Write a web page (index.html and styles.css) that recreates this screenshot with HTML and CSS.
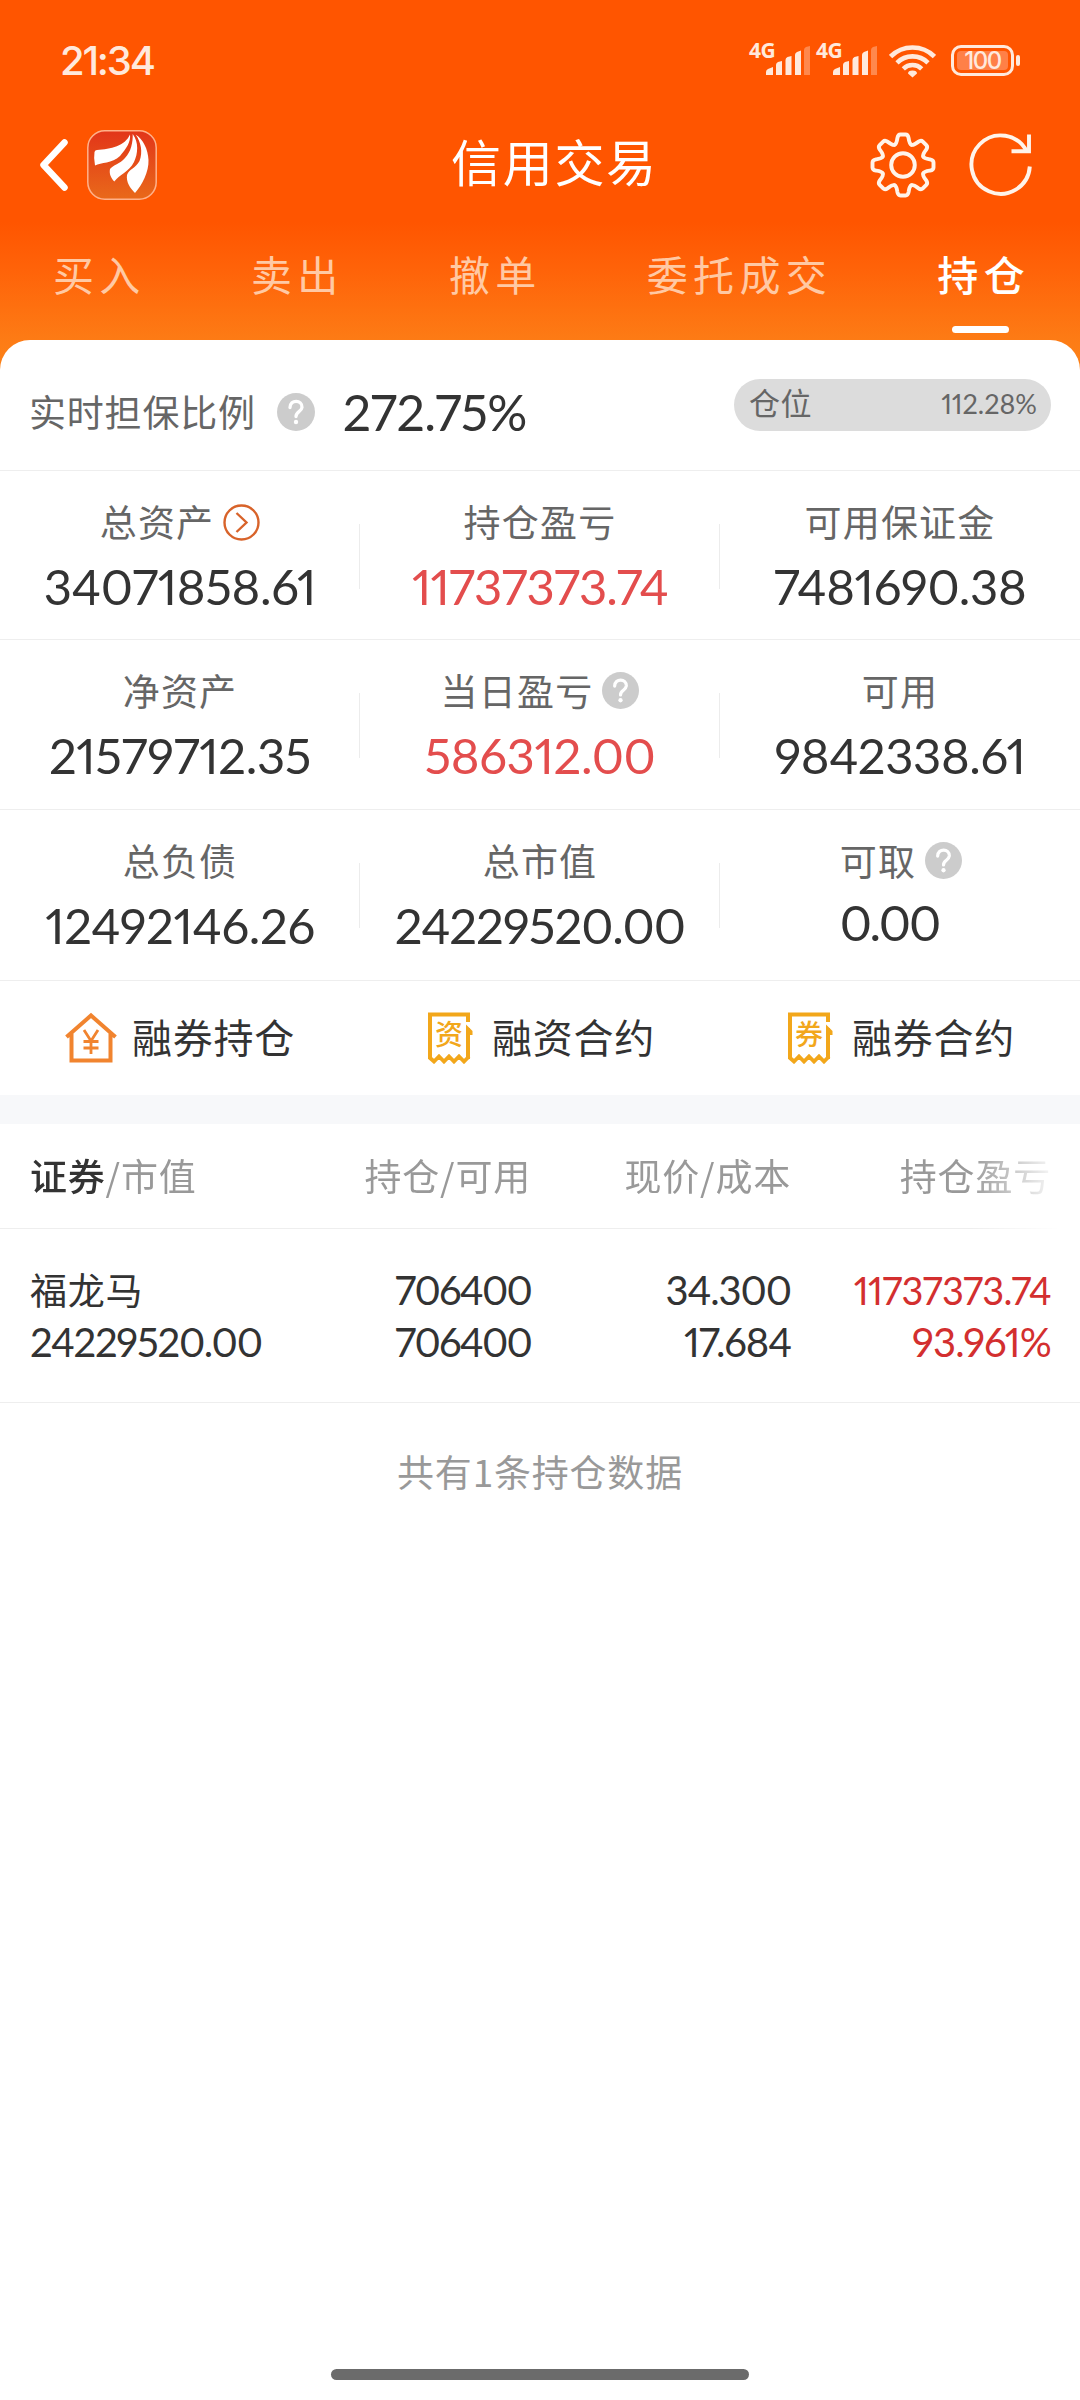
FILE: index.html
```html
<!DOCTYPE html>
<html lang="zh-CN">
<head>
<meta charset="utf-8">
<title>信用交易</title>
<link rel="stylesheet" href="styles.css">
</head>
<body>
<div class="screen">
  <header class="header">
    <div class="status">
      <span class="clock">21:34</span>
      <div class="status-icons">
        <div class="signal"><span class="net">4G</span>
          <svg width="44" height="30" viewBox="0 0 44 30" fill="#ffe9dc"><path d="M0 29v-3q0-2 2-3l5-2v8zM10 29V19q0-2 2-3l4-1v14zM19.500 29V14q0-2 2-3l4-1v19zM29 29V9q0-2 2-3l4-1.500v24.500z"/><path opacity=".35" d="M38 29V4q0-2 2-3l4-1v29z"/></svg>
        </div>
        <div class="signal"><span class="net">4G</span>
          <svg width="44" height="30" viewBox="0 0 44 30" fill="#ffe9dc"><path d="M0 29v-3q0-2 2-3l5-2v8zM10 29V19q0-2 2-3l4-1v14zM19.500 29V14q0-2 2-3l4-1v19zM29 29V9q0-2 2-3l4-1.500v24.500z"/><path opacity=".35" d="M38 29V4q0-2 2-3l4-1v29z"/></svg>
        </div>
        <svg class="wifi" width="47" height="34" viewBox="0 0 47 34" fill="none" stroke="#ffe9dc" stroke-width="4.600"><path d="M1.600 12.500a31 31 0 0 1 43.800 0M8 18.800a22 22 0 0 1 31 0M14.300 24.800a13.200 13.200 0 0 1 18.400 0"/><path d="M23.500 33.500l-4.500-4q0-3 4.500-3t4.500 3z" fill="#ffe9dc" stroke="none"/></svg>
        <div class="battery"><span class="charge">100</span></div>
      </div>
    </div>
    <div class="nav">
      <svg class="back" width="30" height="56" viewBox="0 0 30 56" fill="none" stroke="#fff" stroke-width="6.500" stroke-linecap="round" stroke-linejoin="round"><path d="M25.500 5.500L4.500 28l21 22.500"/></svg>
      <svg class="logo" width="70" height="70" viewBox="0 0 70 70">
        <defs><linearGradient id="lg" x1="0" y1="0" x2="0" y2="1"><stop offset="0" stop-color="#e23519"/><stop offset="1" stop-color="#e9691a"/></linearGradient></defs>
        <rect x=".8" y=".8" width="68.400" height="68.400" rx="17" fill="url(#lg)" stroke="#ffb18a" stroke-width="1.500"/>
        <g fill="#fff"><path d="M43 4.500C38 16 24 19 10 20q-2 0-2.500 2Q6.500 28 8 35.500C14 32 25 34 33 26 39 19 44 12 43 4.500z"/><path d="M45.700 4C46 12 44 22 38 28c-5 6-12 7-15 11-1 5 1 9 4.300 12.500C32 45 42 42 47 32c4-8 5-20-1.300-28z"/><path d="M48.700 4.700C54 12 56 22 52.500 31 49 38 42 39 40 45c-1 7 3 13 8 18C55 55 62 42 61.500 30 61 19 56 9 48.700 4.700z"/></g>
      </svg>
      <h1 class="title">信用交易</h1>
      <svg class="gear" width="66" height="66" viewBox="-33 -33 66 66" fill="none" stroke="#fff4ea" stroke-width="3.900" stroke-linecap="round">
        <defs><path id="tooth" d="M-8.400-20.300C-6.300-21.200-6-24-5.600-27Q-5-30.500-2.500-30.500H2.500Q5-30.500 5.600-27C6-24 6.300-21.200 8.400-20.300"/></defs>
        <use href="#tooth"/><use href="#tooth" transform="rotate(45)"/><use href="#tooth" transform="rotate(90)"/><use href="#tooth" transform="rotate(135)"/><use href="#tooth" transform="rotate(180)"/><use href="#tooth" transform="rotate(225)"/><use href="#tooth" transform="rotate(270)"/><use href="#tooth" transform="rotate(315)"/>
        <circle r="11.800"/>
      </svg>
      <svg class="refresh" width="66" height="66" viewBox="0 0 66 66" fill="none" stroke="#fff4ea" stroke-width="3.900"><path d="M60.800 34.500A29.200 29.200 0 1 1 58 20"/><path d="M60 2.500V19.300H42.500"/></svg>
    </div>
    <nav class="tabs">
      <span>买入</span><span>卖出</span><span>撤单</span><span>委托成交</span><span class="active">持仓</span>
    </nav>
  </header>

  <main class="card">
    <section class="ratio">
      <span class="label">实时担保比例</span>
      <span class="help help-big"><svg viewBox="0 0 38 38"><circle cx="19" cy="19" r="19" fill="#ccc"/><path d="M13 14.500C13 6 25.500 6.500 25 14.300 24.500 19 19 18.500 19 23.500" fill="none" stroke="#fff" stroke-width="3.300" stroke-linecap="round"/><circle cx="19" cy="29" r="2.200" fill="#fff"/></svg></span>
      <span class="num ratio-value">272.75%</span>
      <div class="position"><span class="pos-label">仓位</span><span class="pos-value">112.28%</span></div>
    </section>

    <section class="stats">
      <div class="stat"><div class="label">总资产<svg class="go" viewBox="0 0 37 37" fill="none" stroke="#d8632a" stroke-width="2.400"><circle cx="18.500" cy="18.500" r="17"/><path d="M13.500 9l10 9.500-10 9.500"/></svg></div><div class="num">34071858.61</div></div>
      <div class="stat"><div class="label">持仓盈亏</div><div class="num up snug">11737373.74</div></div>
      <div class="stat"><div class="label">可用保证金</div><div class="num">7481690.38</div></div>
    </section>
    <section class="stats">
      <div class="stat"><div class="label">净资产</div><div class="num">21579712.35</div></div>
      <div class="stat"><div class="label">当日盈亏<span class="help"><svg viewBox="0 0 38 38"><circle cx="19" cy="19" r="19" fill="#ccc"/><path d="M13 14.500C13 6 25.500 6.500 25 14.300 24.500 19 19 18.500 19 23.500" fill="none" stroke="#fff" stroke-width="3.300" stroke-linecap="round"/><circle cx="19" cy="29" r="2.200" fill="#fff"/></svg></span></div><div class="num up">586312.00</div></div>
      <div class="stat"><div class="label">可用</div><div class="num">9842338.61</div></div>
    </section>
    <section class="stats last">
      <div class="stat"><div class="label">总负债</div><div class="num">12492146.26</div></div>
      <div class="stat"><div class="label">总市值</div><div class="num snug">24229520.00</div></div>
      <div class="stat cash"><div class="cash-box"><div class="label">可取<span class="help"><svg viewBox="0 0 38 38"><circle cx="19" cy="19" r="19" fill="#ccc"/><path d="M13 14.500C13 6 25.500 6.500 25 14.300 24.500 19 19 18.500 19 23.500" fill="none" stroke="#fff" stroke-width="3.300" stroke-linecap="round"/><circle cx="19" cy="29" r="2.200" fill="#fff"/></svg></span></div><div class="num">0.00</div></div></div>
    </section>

    <section class="actions">
      <div class="action">
        <svg class="house" width="52" height="52" viewBox="0 0 52 52" fill="none" stroke="#f1842f" stroke-width="4"><path d="M1.500 25L26 3.500 50.500 25M6.500 21.500V48.500H45.500V21.500"/><path stroke-width="2.800" d="M19 18l7 11 7-11M26 28.500V42M18.500 29.500h15M18.500 36h15"/></svg>
        <span class="action-name">融券持仓</span>
      </div>
      <div class="action contract">
        <span class="ticket"><svg width="45" height="52" viewBox="0 0 45 52" fill="none" stroke="#f2a71b" stroke-width="4"><path d="M40 10V2.500H2V47M40 16V47"/><path stroke-width="3.800" d="M1.500 45.500l4.500 4 5-5 5 5 5-5 5 5 5-5 5 5 5-5"/><path d="M38 12.500l6.500 6.500v4H38z" fill="#f2a71b" stroke="none"/></svg><b>资</b></span>
        <span class="action-name">融资合约</span>
      </div>
      <div class="action contract">
        <span class="ticket"><svg width="45" height="52" viewBox="0 0 45 52" fill="none" stroke="#f2a71b" stroke-width="4"><path d="M40 10V2.500H2V47M40 16V47"/><path stroke-width="3.800" d="M1.500 45.500l4.500 4 5-5 5 5 5-5 5 5 5-5 5 5 5-5"/><path d="M38 12.500l6.500 6.500v4H38z" fill="#f2a71b" stroke="none"/></svg><b>券</b></span>
        <span class="action-name">融券合约</span>
      </div>
    </section>

    <section class="table">
      <div class="thead">
        <span><strong>证券</strong>/市值</span><span>持仓/可用</span><span>现价/成本</span><span>持仓盈亏</span>
      </div>
      <div class="trow">
        <div class="holding"><span class="name">福龙马</span><span>24229520.00</span></div>
        <div class="quantity"><span>706400</span><span>706400</span></div>
        <div class="price"><span>34.300</span><span>17.684</span></div>
        <div class="gain"><span class="small">11737373.74</span><span>93.961%</span></div>
      </div>
      <p class="count">共有1条持仓数据</p>
    </section>
  </main>
  <div class="home-bar"></div>
</div>
</body>
</html>
```
FILE: styles.css
```css
* { box-sizing: border-box; }
body { margin: 0; background: #fff; font-family: "Noto Sans CJK SC", sans-serif; }
svg { display: block; flex: none; }
.screen {
  width: 1080px; height: 2400px; display: flex; flex-direction: column; overflow: hidden;
  background: linear-gradient(#ff5500 0, #ff5500 222px, #ff6309 270px, #fd7d16 345px, #fb8318 380px);
}
.header { height: 340px; flex: none; }

.status { height: 120px; padding: 0 60px; display: flex; justify-content: space-between; }
.clock { font: 500 40px/122px Inter, sans-serif; letter-spacing: -2.200px; color: #ffe9dc; }
.status-icons { display: flex; align-items: flex-start; padding-top: 42px; }
.signal { display: flex; width: 67px; }
.signal svg { margin: 4px 0 0 -11px; }
.net { font: 700 21px/16px "Noto Sans", sans-serif; letter-spacing: -.6px; color: #ffe9dc; width: 28px; }
.wifi { margin: 2px 15px 0 6px; }
.battery {
  position: relative; width: 63px; height: 31px; margin: 3px 6px 0 0; padding: 3px;
  border: 3px solid #ffe9dc; border-radius: 10px; display: flex;
}
.battery::after {
  content: ""; position: absolute; right: -9px; top: 7px; width: 4px; height: 11px;
  border-radius: 2px; background: #ffe9dc;
}
.charge {
  flex: 1; border-radius: 4px; background: #ff8047; color: #ffe9dc; text-align: center;
  font: 500 24px/20px Inter, sans-serif; letter-spacing: -1.500px;
}

.nav { height: 90px; display: flex; align-items: center; padding: 0 45px 0 39px; }
.logo { margin: -1px 294px 0 18px; }
.back { margin-top: 0; }
.title { margin: -10px 0 0; font-weight: 400; font-size: 50px; line-height: 90px; letter-spacing: 1.700px; color: #fff; white-space: nowrap; }
.gear { margin-left: auto; }
.refresh { margin: 0 0 0 33px; }

.tabs { height: 130px; padding: 0 50px 0 53px; display: flex; justify-content: space-between; font-size: 41px; line-height: 126px; letter-spacing: 5.300px; color: #ffc9a4; }
.active { position: relative; font-weight: 500; color: #fff; }
.active::after {
  content: ""; position: absolute; left: 15px; bottom: 7px; width: 57px; height: 7px;
  border-radius: 4px; background: #fff;
}

.card { flex: 1; background: #fff; border-radius: 30px 30px 0 0; }
.label { display: flex; align-items: center; font-size: 37px; line-height: 54px; letter-spacing: 1.200px; color: #666; white-space: nowrap; }
.num { font-family: Lato, sans-serif; font-feature-settings: "pnum"; font-size: 49px; line-height: 60px; letter-spacing: -.35px; color: #333; }
.snug { letter-spacing: -.9px; }
.up { color: #e34d4d; }
.help svg { width: 37px; height: 37px; }
.help { margin: 1px 0 0 9px; }
.help-big { margin-left: 21px; }
.help-big svg { width: 38px; height: 38px; }
.go { width: 37px; height: 37px; margin: 2px 0 0 9px; }

.ratio { height: 131px; padding: 12px 29px 0 29px; display: flex; align-items: center; border-bottom: 1px solid #eee; }
.ratio .label { letter-spacing: .8px; }
.ratio-value { margin: 1px 0 0 28px; font-size: 50px; letter-spacing: -.6px; }
.position {
  margin: -13px 0 0 auto; width: 317px; height: 52px; padding: 0 14px 0 15px; border-radius: 26px;
  display: flex; align-items: center; justify-content: space-between; background: #dcdcdc; color: #666;
}
.pos-label { font-size: 31px; line-height: 44px; margin-top: -6px; letter-spacing: .5px; }
.pos-value { font: 27px/40px Lato, sans-serif; font-feature-settings: "pnum"; margin-top: -1px; }

.stats { height: 169px; display: grid; grid-template-columns: repeat(3, 1fr); border-bottom: 1px solid #eee; }
.stats + .stats { height: 170px; }
.stats.last { height: 171px; }
.stat { position: relative; display: flex; flex-direction: column; align-items: center; padding-top: 23px; }
.stat .num { margin-top: 8px; }
.stat + .stat::before { content: ""; position: absolute; left: -1px; top: 53px; width: 1px; height: 65px; background: #ececec; }
.cash-box { margin-left: 2px; }
.cash .num { margin: 5px 0 0 0; letter-spacing: -2px; }

.actions { height: 114px; display: grid; grid-template-columns: repeat(3, 1fr); }
.action { display: flex; align-items: center; justify-content: center; font-size: 40px; letter-spacing: .8px; color: #333; }
.action-name { margin-top: -4px; }
.house { margin-right: 15px; }
.contract { padding-left: 3px; }
.ticket { position: relative; margin-right: 19px; }
.ticket b { position: absolute; left: 7px; top: 1px; font-size: 28px; line-height: 40px; letter-spacing: 0; font-weight: 500; color: #f2a71b; }

.table { border-top: 29px solid #f7f8fa; }
.thead, .trow { display: grid; grid-template-columns: 240px 261px 260px 260px; padding: 0 29px 0 30px; border-bottom: 1px solid #eee; }
.thead {
  height: 105px; font-size: 37px; line-height: 102px; letter-spacing: .8px; color: #999;
  -webkit-mask-image: linear-gradient(90deg, #000 970px, transparent 1060px);
  mask-image: linear-gradient(90deg, #000 970px, transparent 1060px);
}
.thead span { white-space: nowrap; }
.thead span + span, .trow div + div { text-align: right; }
.thead strong { font-weight: 500; color: #333; }
.trow { height: 174px; padding-top: 35px; font: 40px/52px Lato, sans-serif; font-feature-settings: "pnum"; letter-spacing: -.8px; color: #333; }
.trow span { display: block; }
.trow .name { font-family: "Noto Sans CJK SC", sans-serif; font-size: 37px; line-height: 50px; margin-bottom: 2px; letter-spacing: .8px; }
.holding { letter-spacing: -1.200px; }
.quantity { letter-spacing: -1.800px; }
.price { letter-spacing: -1.100px; }
.trow .gain { color: #d32f2f; }
.trow .small { font-size: 38px; }
.count { margin: 42px 0 0; text-align: center; font-size: 37px; line-height: 52px; letter-spacing: .8px; color: #999; }

.home-bar { flex: none; width: 418px; height: 11px; margin: -31px auto 20px; border-radius: 6px; background: #6b6b6b; }
```
